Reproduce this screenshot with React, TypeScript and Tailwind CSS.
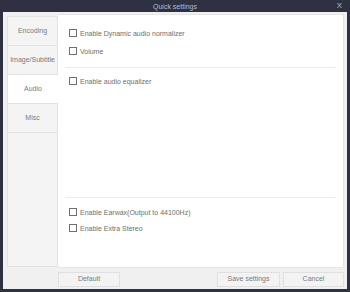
import React from "react";

const font = { fontFamily: '"Liberation Sans", Arial, sans-serif' };

function Check({ label }: { label: string }) {
  return (
    <div className="flex items-center h-[16px] pl-[11px]">
      <div className="w-[8px] h-[8px] border border-[#707070] bg-white" />
      <span className="ml-[3px] text-[7px] text-[#6e6e6e] leading-none">{label}</span>
    </div>
  );
}

function Tab({ label, active }: { label: string; active?: boolean }) {
  return (
    <div
      className={
        "h-[29px] flex items-center justify-center text-[7px] text-[#7a7a7a] border-b border-l border-[#e2e2e2] " +
        (active ? "bg-white" : "bg-[#f4f4f4] border-r")
      }
    >
      {label}
    </div>
  );
}

function Btn({ label, w }: { label: string; w: string }) {
  return (
    <div
      className={
        "h-[15px] flex items-center justify-center bg-[#f3f3f3] border border-[#e0e0e0] text-[7px] text-[#7a7a7a] " +
        w
      }
    >
      {label}
    </div>
  );
}

export default function App() {
  return (
    <div className="w-[350px] h-[292px] bg-[#2f3142] flex flex-col" style={font}>
      <div className="h-[12px] relative flex items-center justify-center text-[7px] text-[#b9bbc6] leading-none">
        Quick settings
        <span className="absolute right-[8px] top-[2px] text-[8px] text-[#b9bbc6]">X</span>
      </div>
      <div className="flex-1 mx-[3px] mb-[3px] bg-[#f0f0f0] flex flex-col pl-[4px] pr-[3px] pt-[2px]">
        <div className="flex h-[254px]">
          <div className="w-[51px] flex flex-col pt-[2px]">
            <div className="border-t border-[#e2e2e2]" />
            <Tab label="Encoding" />
            <Tab label="Image/Subtitle" />
            <Tab label="Audio" active />
            <Tab label="Misc" />
            <div className="flex-1 border-l border-r border-b border-[#e2e2e2] bg-[#f4f4f4] mb-[1px]" />
          </div>
          <div className="flex-1 bg-white border border-l-0 border-[#e6e6e6] flex flex-col">
            <div className="h-[10px]" />
            <Check label="Enable Dynamic audio normalizer" />
            <div className="h-[2px]" />
            <Check label="Volume" />
            <div className="h-[8px]" />
            <div className="h-[1px] bg-[#ececec] mx-[7px]" />
            <div className="h-[5px]" />
            <Check label="Enable audio equalizer" />
            <div className="flex-1" />
            <div className="h-[1px] bg-[#ececec] mx-[7px]" />
            <div className="h-[6px]" />
            <Check label="Enable Earwax(Output to 44100Hz)" />
            <Check label="Enable Extra Stereo" />
            <div className="h-[31px]" />
          </div>
        </div>
        <div className="flex items-center mt-[4px] pl-[51px]">
          <Btn label="Default" w="w-[62px]" />
          <div className="flex-1" />
          <Btn label="Save settings" w="w-[63px]" />
          <div className="w-[3px]" />
          <Btn label="Cancel" w="w-[61px]" />
        </div>
      </div>
    </div>
  );
}
